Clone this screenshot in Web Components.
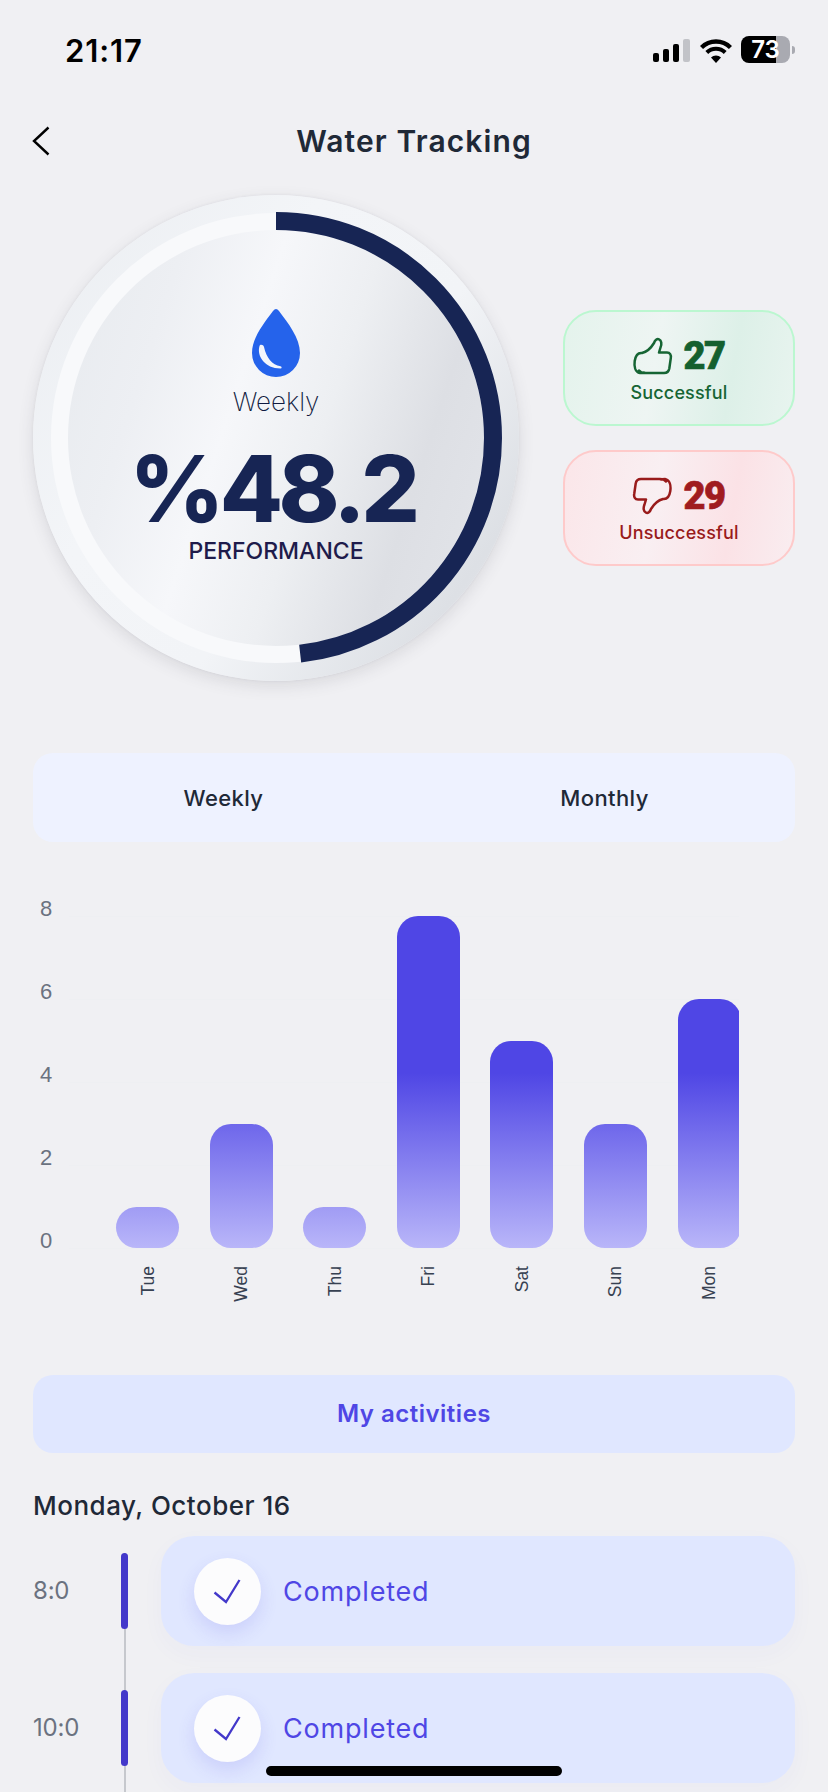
<!DOCTYPE html>
<html lang="en">
<head>
<meta charset="utf-8">
<title>Water Tracking</title>
<style>
html, body { margin: 0; background: #f0f0f3; }
body { width: 828px; height: 1792px; overflow: hidden; font-family: Inter, "Noto Sans", sans-serif; }
</style>
</head>
<body>
<water-screen>
  <status-bar slot="top" time="21:17" battery="73"></status-bar>
  <top-bar slot="top">Water Tracking</top-bar>
  <performance-ring slot="hero" value="48.2">
    <span slot="period">Weekly</span>
    <span slot="figure">%48.2</span>
    <span slot="caption">PERFORMANCE</span>
  </performance-ring>
  <stat-card slot="stats" tone="good" count="27">Successful</stat-card>
  <stat-card slot="stats" tone="bad" count="29">Unsuccessful</stat-card>
  <period-tabs slot="tabs">
    <span>Weekly</span>
    <span>Monthly</span>
  </period-tabs>
  <bar-chart slot="chart"></bar-chart>
  <section-pill slot="list">My activities</section-pill>
  <date-heading slot="list">Monday, October 16</date-heading>
  <activity-row slot="list" time="8:0">Completed</activity-row>
  <activity-row slot="list" time="10:0">Completed</activity-row>
</water-screen>
<home-indicator></home-indicator>

<script>
function makeTemplate (html) {
  const t = document.createElement('template');
  t.innerHTML = html;
  return t;
}

const SCREEN = makeTemplate(`
<style>
:host { display: block; color: #1f2937; }
.hero { display: flex; align-items: center; justify-content: space-between; padding: 0 33px; margin-top: 15px; }
.stats { display: flex; flex-direction: column; gap: 24px; }
.pad { padding: 0 33px; }
.tabs { margin-top: 72px; }
</style>
<slot name="top"></slot>
<div class="hero">
  <slot name="hero"></slot>
  <div class="stats"><slot name="stats"></slot></div>
</div>
<div class="pad tabs"><slot name="tabs"></slot></div>
<slot name="chart"></slot>
<div class="pad"><slot name="list"></slot></div>
`);

class WaterScreen extends HTMLElement {
  constructor () {
    super();
    this.attachShadow({ mode: 'open' }).append(SCREEN.content.cloneNode(true));
  }
}
customElements.define('water-screen', WaterScreen);

const STATUS = makeTemplate(`
<style>
:host { display: flex; align-items: flex-start; justify-content: space-between; height: 102px; box-sizing: border-box; padding: 36px 33px 0 65px; color: #000; }
.time { font: 600 31px/29px Inter, sans-serif; letter-spacing: .9px; }
.icons { display: flex; align-items: center; height: 27px; }
.signal { display: flex; align-items: flex-end; gap: 4px; height: 23px; margin-top: 2px; }
.signal i { display: block; width: 6px; background: #000; border-radius: 2px; }
.signal i:last-child { width: 7px; background: #c2c3c8; }
.wifi { margin-left: 10px; margin-top: 2px; display: block; }
.battery { margin-left: 9px; width: 49px; height: 27px; border-radius: 8px; background: linear-gradient(90deg, #000 72%, #a9aab1 72%); color: #fff; font: 600 24px/27px Inter, sans-serif; text-align: center; }
.nub { width: 3px; height: 8px; margin-left: 2px; background: #a9aab1; border-radius: 0 3px 3px 0; }
</style>
<span class="time"></span>
<div class="icons">
  <div class="signal"><i style="height:9px"></i><i style="height:13px"></i><i style="height:18px"></i><i style="height:23px"></i></div>
  <svg class="wifi" width="32" height="24" viewBox="0 0 32 24">
    <path d="M1.500 8.500A20.500 20.500 0 0 1 30.500 8.500" fill="none" stroke="#000" stroke-width="4.400"/>
    <path d="M6.800 13.500A13 13 0 0 1 25.200 13.500" fill="none" stroke="#000" stroke-width="4"/>
    <path d="M11 18.500L16 24L21 18.500A7 7 0 0 0 11 18.500z"/>
  </svg>
  <div class="battery"></div>
  <div class="nub"></div>
</div>
`);

class StatusBar extends HTMLElement {
  constructor () {
    super();
    this.attachShadow({ mode: 'open' }).append(STATUS.content.cloneNode(true));
    this.shadowRoot.querySelector('.time').textContent = this.getAttribute('time');
    this.shadowRoot.querySelector('.battery').textContent = this.getAttribute('battery');
  }
}
customElements.define('status-bar', StatusBar);

const TOPBAR = makeTemplate(`
<style>
:host { display: flex; align-items: center; justify-content: center; position: relative; height: 78px; font: 600 30px/1 Inter, sans-serif; color: #1f2937; letter-spacing: 1.100px; }
svg { position: absolute; left: 32px; top: 24px; }
</style>
<svg width="18" height="30" viewBox="0 0 18 30"><path d="M16.500 1.500L2 15l14.500 13.500" fill="none" stroke="#000" stroke-width="2.400"/></svg>
<slot></slot>
`);

class TopBar extends HTMLElement {
  constructor () {
    super();
    this.attachShadow({ mode: 'open' }).append(TOPBAR.content.cloneNode(true));
  }
}
customElements.define('top-bar', TopBar);

const RING = makeTemplate(`
<style>
:host { display: block; position: relative; flex: none; width: 486px; height: 486px; border-radius: 50%; background: linear-gradient(125deg, #eaedf1 0%, #f3f5f8 35%, #f2f4f7 60%, #dde0e5 85%, #e8eaee 100%); box-shadow: 0 5px 16px rgba(60, 65, 80, .13), 0 0 3px rgba(60, 65, 80, .08); }
.track { position: absolute; inset: 18px; border-radius: 50%; background: #f8f9fb; }
.disc { position: absolute; inset: 35px; border-radius: 50%; background: linear-gradient(108deg, #e8ebef 4%, #edeff3 22%, #f6f7fa 40%, #edeff2 58%, #dddfe4 78%, #e0e2e7 88%, #e8e9ed 100%); }
svg.arc { position: absolute; inset: 0; }
.content { position: absolute; inset: 0; display: flex; flex-direction: column; align-items: center; padding-top: 114px; box-sizing: border-box; }
.drop { display: block; }
.period { margin-top: 9px; font: 200 26px/32px Inter, sans-serif; color: #0f1a40; }
.figure { margin: 29px 0 0 -7px; font: 800 92px/84px Inter, sans-serif; color: #172554; letter-spacing: -4.500px; }
.caption { margin-top: 6px; font: 500 23px/28px Inter, sans-serif; color: #1e1b4b; }
</style>
<div class="track"></div>
<div class="disc"></div>
<svg class="arc" width="486" height="486" viewBox="0 0 486 486">
  <circle id="bar" cx="243" cy="243" r="217" fill="none" stroke="#172554" stroke-width="18" transform="rotate(-90 243 243)"/>
</svg>
<div class="content">
  <svg class="drop" width="48" height="68" viewBox="0 0 48 68">
    <path d="M24 0c1 0 2 .7 3 2C36 14 48 29 48 44a24 24 0 0 1-48 0C0 29 12 14 21 2c1-1.300 2-2 3-2z" fill="#2563eb"/>
    <path d="M7.500 37C4.500 47 13 59.500 28.500 59.500c1.500 0 1.500-2 0-2.200C20 56 14.500 49 12 38c-.5-2.500-4-3.200-4.500-1z" fill="#f4f6fc"/>
  </svg>
  <div class="period"><slot name="period"></slot></div>
  <div class="figure"><slot name="figure"></slot></div>
  <div class="caption"><slot name="caption"></slot></div>
</div>
`);

class PerformanceRing extends HTMLElement {
  constructor () {
    super();
    this.attachShadow({ mode: 'open' }).append(RING.content.cloneNode(true));
    const circumference = 2 * Math.PI * 217;
    const bar = this.shadowRoot.getElementById('bar');
    bar.setAttribute('stroke-dasharray', `${circumference * this.getAttribute('value') / 100} ${circumference}`);
  }
}
customElements.define('performance-ring', PerformanceRing);

const THUMB = 'M9 15C13 14 18 10 21 5C22 2 24 .5 26 1.300C28.500 2.300 29 6 27.500 9.500L26 14.500L34 14.500C37 14.500 38.300 17 37.800 20L36.300 30.500C35.800 33.500 34 35 31 35L12 35C9 35 7 34 6 32.500M9 15C5 14.500 2.500 18 1.700 23C1 28 2 34 7 35C10 35 11 34 12 35';

const STAT = makeTemplate(`
<style>
:host { display: flex; flex-direction: column; align-items: center; justify-content: center; width: 232px; height: 116px; box-sizing: border-box; padding-top: 6px; border-radius: 33px; border: 2px solid; }
:host([tone=good]) { color: #166534; border-color: #bbf7d0; background: linear-gradient(100deg, #e4f3ec 0%, #eef5f3 40%, #ddf0e8 72%, #e8f4ef 100%); }
:host([tone=bad]) { color: #991b1b; border-color: #fecaca; background: linear-gradient(100deg, #fbe6e9 0%, #f9eff2 40%, #fbe2e6 72%, #f9edf0 100%); }
.row { display: flex; align-items: center; gap: 11px; }
svg { display: block; overflow: visible; }
:host([tone=bad]) svg { transform: rotate(180deg); }
.count { font: 900 38px/40px Roboto, sans-serif; letter-spacing: -1.500px; -webkit-text-stroke: .7px currentColor; }
:host([tone=good]) .count { color: #14602f; }
:host([tone=bad]) .count { color: #a01c1f; }
.label { margin-top: 4px; font: 500 18px/26px Inter, sans-serif; letter-spacing: .15px; }
</style>
<div class="row">
  <svg width="39" height="36" viewBox="0 0 39 36"><path d="${THUMB}" fill="none" stroke="currentColor" stroke-width="2.500" stroke-linejoin="round" stroke-linecap="round"/></svg>
  <span class="count"></span>
</div>
<div class="label"><slot></slot></div>
`);

class StatCard extends HTMLElement {
  constructor () {
    super();
    this.attachShadow({ mode: 'open' }).append(STAT.content.cloneNode(true));
    this.shadowRoot.querySelector('.count').textContent = this.getAttribute('count');
  }
}
customElements.define('stat-card', StatCard);

const TABS = makeTemplate(`
<style>
:host { display: grid; grid-template-columns: 1fr 1fr; height: 89px; border-radius: 20px; background: #eef2ff; }
::slotted(span) { display: flex; align-items: center; justify-content: center; font: 500 22px/1 Inter, sans-serif; color: #1f2937; letter-spacing: .4px; }
</style>
<slot></slot>
`);

class PeriodTabs extends HTMLElement {
  constructor () {
    super();
    this.attachShadow({ mode: 'open' }).append(TABS.content.cloneNode(true));
  }
}
customElements.define('period-tabs', PeriodTabs);

const CHART = makeTemplate(`
<style>
:host { display: flex; height: 533px; box-sizing: border-box; padding: 55px 0 0 40px; }
.axis { display: flex; flex-direction: column; gap: 59px; width: 29px; font: 22px/24px "Liberation Sans", sans-serif; color: #6b7280; }
.plot { flex: none; width: 670px; height: 400px; margin-top: 19px; overflow: hidden; background: repeating-linear-gradient(to bottom, #eeeff2 0 1px, transparent 1px 83px) top left / 100% 333px no-repeat; }
.cols { display: flex; gap: 30.600px; padding-left: 47px; }
.col { flex: none; width: 63px; }
.slot { display: flex; align-items: flex-end; height: 332px; }
.bar { width: 100%; border-radius: 21px; background: linear-gradient(to top, #b9b6f9 0, #4f46e5 175px); }
.day { margin-top: 18px; display: flex; justify-content: center; }
.day span { writing-mode: vertical-rl; transform: rotate(180deg); font: 17.500px/20px "Liberation Sans", sans-serif; color: #374151; }
</style>
<div class="axis"></div>
<div class="plot"><div class="cols"></div></div>
`);

const WEEK = [['Tue', 1], ['Wed', 3], ['Thu', 1], ['Fri', 8], ['Sat', 5], ['Sun', 3], ['Mon', 6]];

class BarChart extends HTMLElement {
  constructor () {
    super();
    this.attachShadow({ mode: 'open' }).append(CHART.content.cloneNode(true));
    const axis = this.shadowRoot.querySelector('.axis');
    for (const tick of [8, 6, 4, 2, 0]) {
      const label = document.createElement('span');
      label.textContent = tick;
      axis.append(label);
    }
    const cols = this.shadowRoot.querySelector('.cols');
    for (const [day, value] of WEEK) {
      const col = document.createElement('div');
      col.className = 'col';
      col.innerHTML = `<div class="slot"><div class="bar" style="height:${value * 41.500}px"></div></div><div class="day"><span>${day}</span></div>`;
      cols.append(col);
    }
  }
}
customElements.define('bar-chart', BarChart);

const PILL = makeTemplate(`
<style>
:host { display: flex; align-items: center; justify-content: center; height: 78px; border-radius: 20px; background: #e0e7ff; font: 600 24px/1 Inter, sans-serif; color: #4f46e5; letter-spacing: .5px; }
</style>
<slot></slot>
`);

class SectionPill extends HTMLElement {
  constructor () {
    super();
    this.attachShadow({ mode: 'open' }).append(PILL.content.cloneNode(true));
  }
}
customElements.define('section-pill', SectionPill);

const HEADING = makeTemplate(`
<style>
:host { display: block; margin-top: 36px; height: 47px; font: 500 26px/34px Inter, sans-serif; color: #1f2937; letter-spacing: .5px; }
</style>
<slot></slot>
`);

class DateHeading extends HTMLElement {
  constructor () {
    super();
    this.attachShadow({ mode: 'open' }).append(HEADING.content.cloneNode(true));
  }
}
customElements.define('date-heading', DateHeading);

const ROW = makeTemplate(`
<style>
:host { display: grid; grid-template-columns: 88px 7px 1fr; column-gap: 0; height: 137px; }
.time { height: 110px; display: flex; align-items: center; font: 400 24px/1 Inter, sans-serif; color: #6b7280; letter-spacing: -.2px; }
.rail { padding-top: 17px; box-sizing: border-box; background: linear-gradient(#c6c8cd, #c6c8cd) center top / 2px 100% no-repeat; }
.rail.first { background-position: center bottom; background-size: 2px calc(100% - 17px); }
.mark { width: 7px; height: 76px; border-radius: 4px; background: #4338ca; }
.card { margin-left: 33px; height: 110px; border-radius: 33px; background: #e0e7ff; display: flex; align-items: center; padding-left: 33px; gap: 22px; box-shadow: 0 8px 24px rgba(79, 70, 229, .03); font: 400 27px/1 Inter, sans-serif; color: #4f46e5; letter-spacing: .8px; }
.tick { flex: none; width: 67px; height: 67px; border-radius: 50%; background: #fcfcfd; display: flex; align-items: center; justify-content: center; box-shadow: 0 8px 18px rgba(79, 70, 229, .14); }
.tick svg { margin-left: -2px; }
</style>
<div class="time"></div>
<div class="rail"><div class="mark"></div></div>
<div class="card">
  <div class="tick"><svg width="28" height="25" viewBox="0 0 28 25"><path d="M1.500 13.500L13 23L26.500 1" fill="none" stroke="#4338ca" stroke-width="2.300"/></svg></div>
  <slot></slot>
</div>
`);

class ActivityRow extends HTMLElement {
  constructor () {
    super();
    this.attachShadow({ mode: 'open' }).append(ROW.content.cloneNode(true));
    this.shadowRoot.querySelector('.time').textContent = this.getAttribute('time');
    if (this.getAttribute('time') === '8:0') {
      this.shadowRoot.querySelector('.rail').classList.add('first');
    }
  }
}
customElements.define('activity-row', ActivityRow);

const HOME = makeTemplate(`
<style>
:host { display: block; position: absolute; left: 266px; top: 1766px; width: 296px; height: 10px; border-radius: 5px; background: #000; }
</style>
`);

class HomeIndicator extends HTMLElement {
  constructor () {
    super();
    this.attachShadow({ mode: 'open' }).append(HOME.content.cloneNode(true));
  }
}
customElements.define('home-indicator', HomeIndicator);
</script>
</body>
</html>
